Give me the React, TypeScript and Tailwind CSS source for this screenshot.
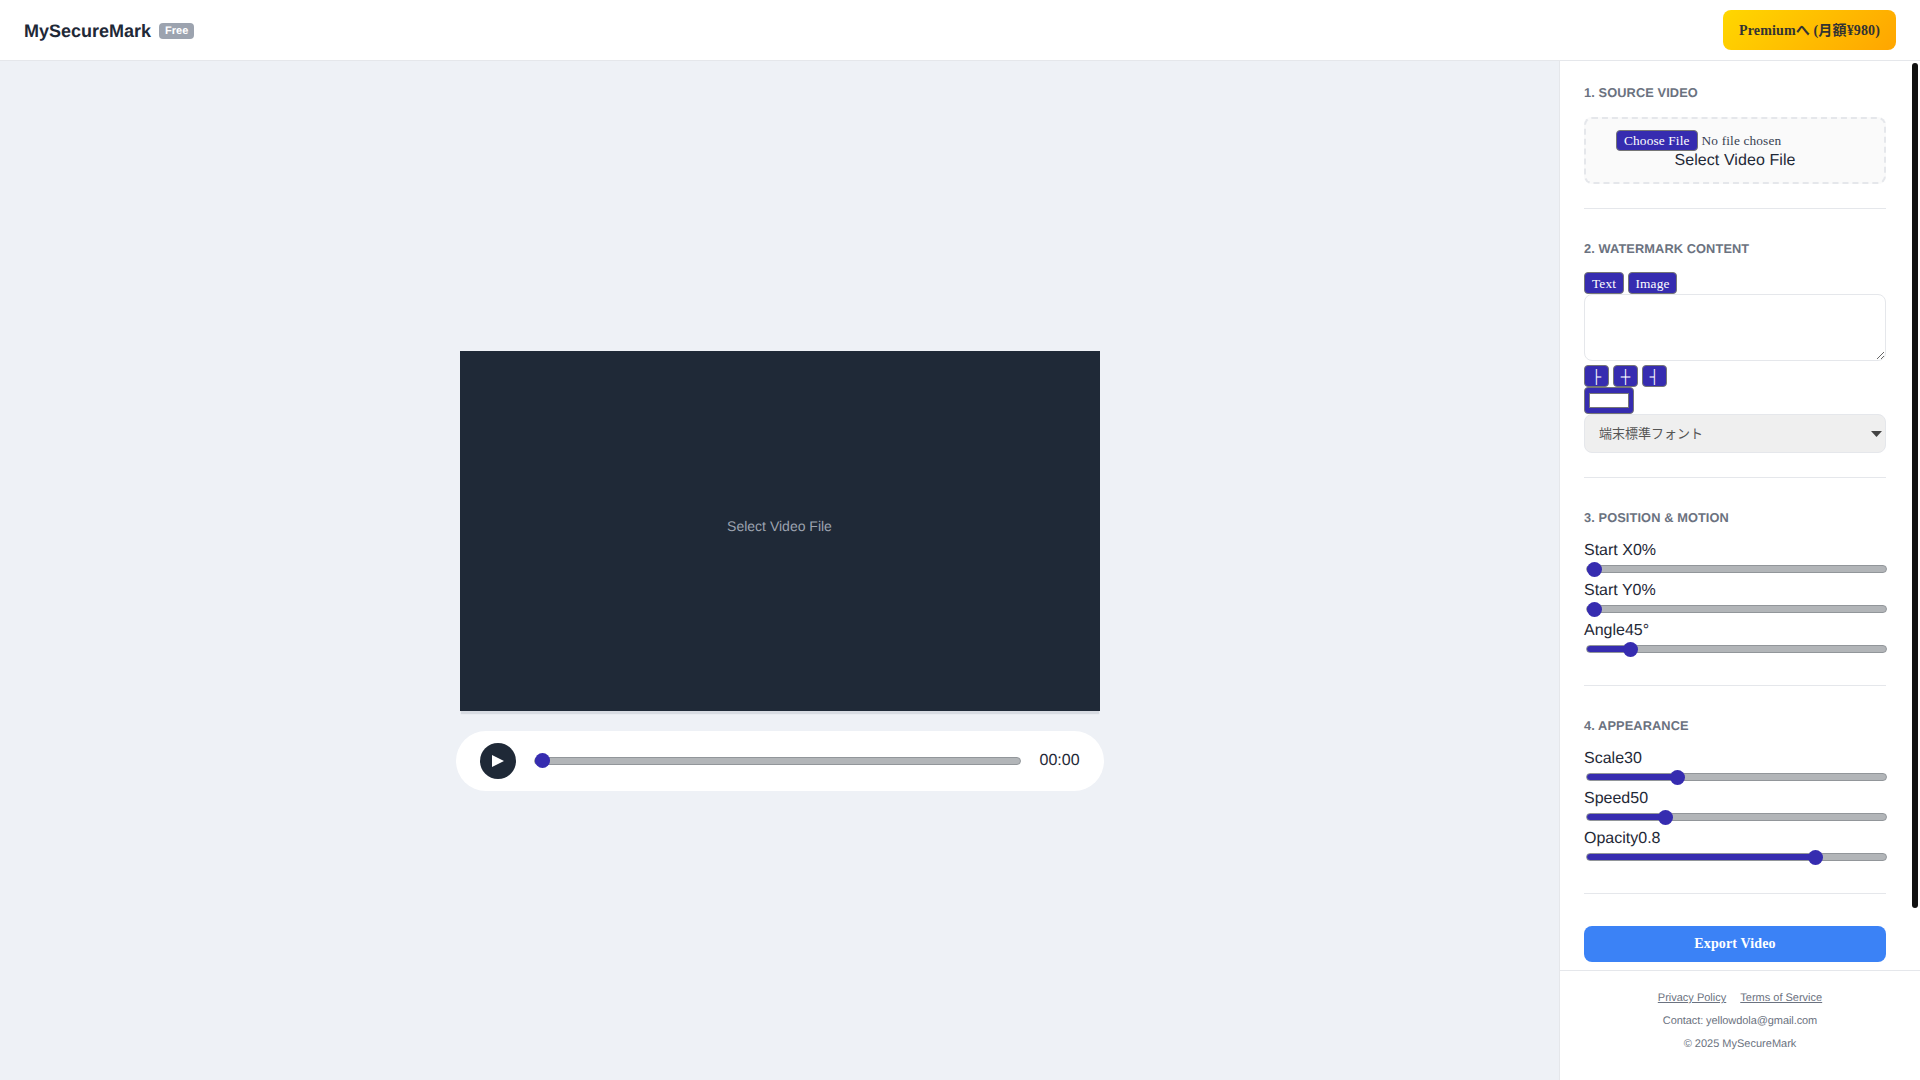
import React from "react";

const serif = "font-['Liberation_Serif','Noto_Sans_CJK_JP',serif] tracking-[0.14px]";
const btn =
  "bg-[#362cb0] text-white text-[13.333px] leading-[15px] tracking-[0.14px] h-[22px] border border-[#767676] rounded flex items-center justify-center font-['Liberation_Serif','DejaVu_Sans',serif]";
const range =
  "appearance-none bg-transparent h-4 m-[2px] cursor-pointer [&::-webkit-slider-runnable-track]:h-2 [&::-webkit-slider-runnable-track]:rounded [&::-webkit-slider-runnable-track]:border [&::-webkit-slider-runnable-track]:border-[#92969a] [&::-webkit-slider-runnable-track]:bg-[linear-gradient(to_right,#362cb0_0,#362cb0_calc(7.5px+var(--p)*(100%-15px)),#b2b5b8_calc(7.5px+var(--p)*(100%-15px)),#b2b5b8_100%)] [&::-webkit-slider-thumb]:appearance-none [&::-webkit-slider-thumb]:w-[15px] [&::-webkit-slider-thumb]:h-[15px] [&::-webkit-slider-thumb]:rounded-full [&::-webkit-slider-thumb]:bg-[#362cb0] [&::-webkit-slider-thumb]:mt-[-4.5px]";

function Range({ value, min = 0, max = 100, className = "" }: { value: number; min?: number; max?: number; className?: string }) {
  const p = (value - min) / (max - min);
  return (
    <input
      type="range"
      min={min}
      max={max}
      step="any"
      defaultValue={value}
      style={{ "--p": p } as React.CSSProperties}
      className={`${range} ${className}`}
    />
  );
}

function Slider({ label, value, min, max }: { label: string; value: number; min?: number; max?: number }) {
  return (
    <div className="h-[40px]">
      <label className="block leading-[20px] h-[18px]">{label}</label>
      <Range value={value} min={min} max={max} className="block w-[301px]" />
    </div>
  );
}

function Section({ title, children }: { title: string; children: React.ReactNode }) {
  return (
    <section className="pb-6 mb-8 border-b border-[#e5e7eb]">
      <h3 className="text-[12.8px] leading-[16px] h-[15px] font-bold uppercase text-[#6b7280] tracking-[0.1px] mb-4">{title}</h3>
      {children}
    </section>
  );
}

export default function App() {
  return (
    <div className="h-screen w-full flex flex-col overflow-hidden bg-[#eef1f6] text-[#1f2937] text-base [text-rendering:geometricPrecision] font-['Liberation_Sans','Noto_Sans_CJK_JP',sans-serif]">
      <header className="h-[61px] shrink-0 bg-white border-b border-[#e5e7eb] flex items-center justify-between px-6">
        <div className="flex items-center gap-2 pt-[1px]">
          <span className="text-lg font-bold leading-5">MySecureMark</span>
          <span className="bg-[#9ca3af] text-white text-[11px] leading-3 font-bold px-[6px] py-[2px] rounded">Free</span>
        </div>
        <button className={`h-10 px-4 pt-[2px] rounded-lg bg-[linear-gradient(135deg,#ffd700,#ffa500)] text-[#333333] text-sm font-bold ${serif}`}>
          Premiumへ (月額¥980)
        </button>
      </header>

      <div className="flex-1 min-h-0 flex">
        <main className="flex-1 flex flex-col items-center justify-center gap-5">
          <div className="w-[640px] h-[360px] pb-[10px] bg-[#1f2937] flex items-center justify-center text-sm text-[#9ca3af] shadow-[0_4px_1px_-1px_#d7dbe2]">
            Select Video File
          </div>
          <div className="w-[648px] h-[60px] bg-white rounded-[30px] flex items-center px-6">
            <button className="w-9 h-9 rounded-full bg-[#1f2937] flex items-center justify-center shrink-0">
              <svg className="ml-[1px]" width="12" height="14" viewBox="0 0 12 14" fill="white"><path d="M0 1l12 6-12 6z" /></svg>
            </button>
            <Range value={0} className="flex-1 min-w-0 !ml-[18px] !mr-[19px]" />
            <span className="w-10 text-base leading-[18px]">00:00</span>
          </div>
        </main>

        <aside className="relative w-[361px] shrink-0 bg-white border-l border-[#e5e7eb] flex flex-col">
          <div className="flex-1 min-h-0 overflow-hidden pl-6 pr-[34px] pt-6">
            <Section title="1. Source Video">
              <div className="pt-[1px]">
                <div className="h-[67px] border-2 border-dashed border-[#e5e7eb] rounded-lg bg-[#fafafa] pt-[11px] text-center">
                  <input
                    type="file"
                    className={`block mx-auto w-[238px] text-[13.333px] text-[#374151] h-[21px] leading-[15px] ${serif} file:bg-[#362cb0] file:text-white file:border file:border-solid file:border-[#767676] file:rounded file:px-[7px] file:py-0 file:mr-1 file:h-[21px]`}
                  />
                  <div className="mt-[1px] leading-[18px] tracking-[0.08px]">Select Video File</div>
                </div>
              </div>
            </Section>

            <Section title="2. Watermark Content">
              <div className="flex gap-1 h-[22px]">
                <button className={`${btn} w-10`}>Text</button>
                <button className={`${btn} w-[49px]`}>Image</button>
              </div>
              <textarea className="block w-full h-[67px] bg-white border border-[#e5e7eb] rounded-lg" />
              <div className="flex gap-1 mt-[4px] h-[22px]">
                <button className={`${btn} w-[25px]`}>├</button>
                <button className={`${btn} w-[25px]`}>┼</button>
                <button className={`${btn} w-[25px]`}>┤</button>
              </div>
              <input
                type="color"
                defaultValue="#ffffff"
                className="block w-[50px] h-[27px] bg-[#362cb0] border border-[#767676] rounded px-1 py-[5px] [&::-webkit-color-swatch-wrapper]:p-0 [&::-webkit-color-swatch]:border [&::-webkit-color-swatch]:border-[#767676] [&::-webkit-color-swatch]:rounded-none"
              />
              <div className="relative">
                <select className="block w-full h-[39px] appearance-none bg-[#efefef] border border-[#e5e7eb] rounded-lg pl-[14px] text-[13px] text-[#555555]">
                  <option>端末標準フォント</option>
                </select>
                <svg className="absolute right-1 top-[17px]" width="11" height="6" viewBox="0 0 11 6" fill="#444444"><path d="M0 0h11L5.5 6z" /></svg>
              </div>
            </Section>

            <Section title="3. Position & Motion">
              <Slider label="Start X0%" value={0} />
              <Slider label="Start Y0%" value={0} />
              <Slider label="Angle45°" value={45} min={0} max={360} />
            </Section>

            <Section title="4. Appearance">
              <Slider label="Scale30" value={30} min={1} max={100} />
              <Slider label="Speed50" value={50} min={0} max={200} />
              <Slider label="Opacity0.8" value={0.8} min={0.1} max={1} />
            </Section>

            <button className={`w-full h-9 rounded-lg bg-[#3b82f6] text-white text-sm font-bold ${serif}`}>Export Video</button>
          </div>

          <div className="absolute right-[2px] top-[2px] w-[6px] h-[845px] rounded-[3px] bg-[#111111]" />

          <footer className="h-[110px] shrink-0 border-t border-[#e5e7eb] pt-[21px] text-[11px] leading-[13px] text-[#6b7280] text-center flex flex-col gap-[10px]">
            <div className="flex justify-center gap-[14px]">
              <a href="#" className="underline">Privacy Policy</a>
              <a href="#" className="underline">Terms of Service</a>
            </div>
            <div className="tracking-[-0.08px]">Contact: yellowdola@gmail.com</div>
            <div>© 2025 MySecureMark</div>
          </footer>
        </aside>
      </div>
    </div>
  );
}
